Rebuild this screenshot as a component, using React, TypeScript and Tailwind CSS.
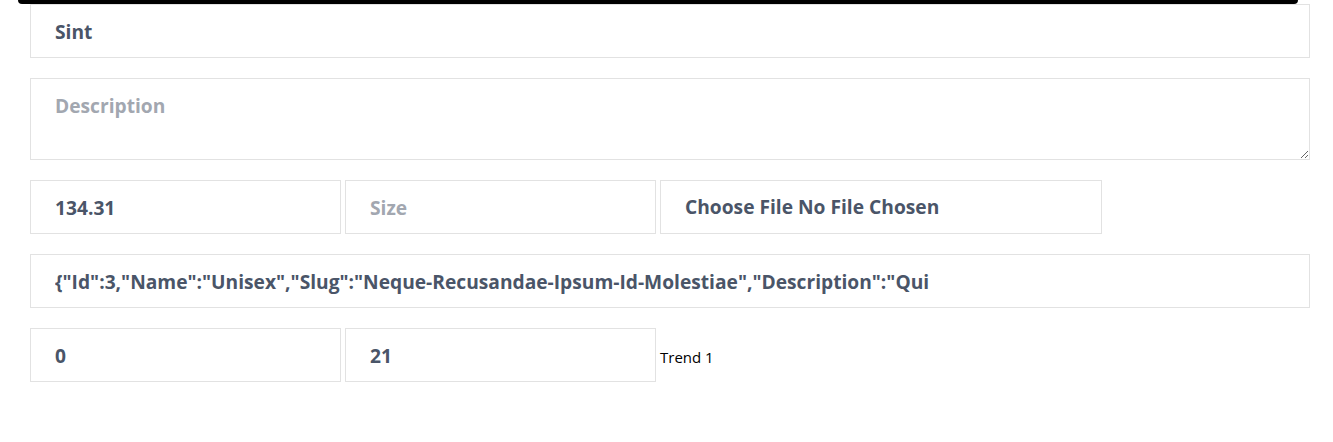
import React from "react";

const box =
  "h-[54px] border border-[#e2e2e2] bg-white px-6 text-[19.2px] font-bold text-[#4a5568] outline-none placeholder:text-[#a2a7b0]";

export default function App() {
  return (
    <div className="min-h-[442px] w-[1333px] bg-white" style={{ fontFamily: '"Open Sans", "Noto Sans", sans-serif' }}>
      <div className="ml-[18px] h-[4px] w-[1280px] rounded-b-[4px] bg-black" />
      <div className="ml-[30px] flex w-[1280px] flex-col gap-5">
        <input className={`${box} w-full`} defaultValue="Sint" />
        <textarea
          className="block h-[82px] w-full border border-[#e2e2e2] bg-white px-6 py-[13px] text-[19.2px] font-bold text-[#4a5568] outline-none placeholder:text-[#a2a7b0]"
          placeholder="Description"
        />
        <div className="flex gap-1">
          <input className={`${box} w-[311px]`} defaultValue="134.31" />
          <input className={`${box} w-[311px]`} placeholder="Size" />
          <div className={`${box} flex w-[442px] items-center`}>Choose File No File Chosen</div>
        </div>
        <input
          className={`${box} w-full`}
          defaultValue={'{"Id":3,"Name":"Unisex","Slug":"Neque-Recusandae-Ipsum-Id-Molestiae","Description":"Qui'}
        />
        <div className="flex items-center gap-1">
          <input className={`${box} w-[311px]`} defaultValue="0" />
          <input className={`${box} w-[311px]`} defaultValue="21" />
          <span className="pt-[4px] text-[15px] text-black">Trend 1</span>
        </div>
      </div>
    </div>
  );
}
